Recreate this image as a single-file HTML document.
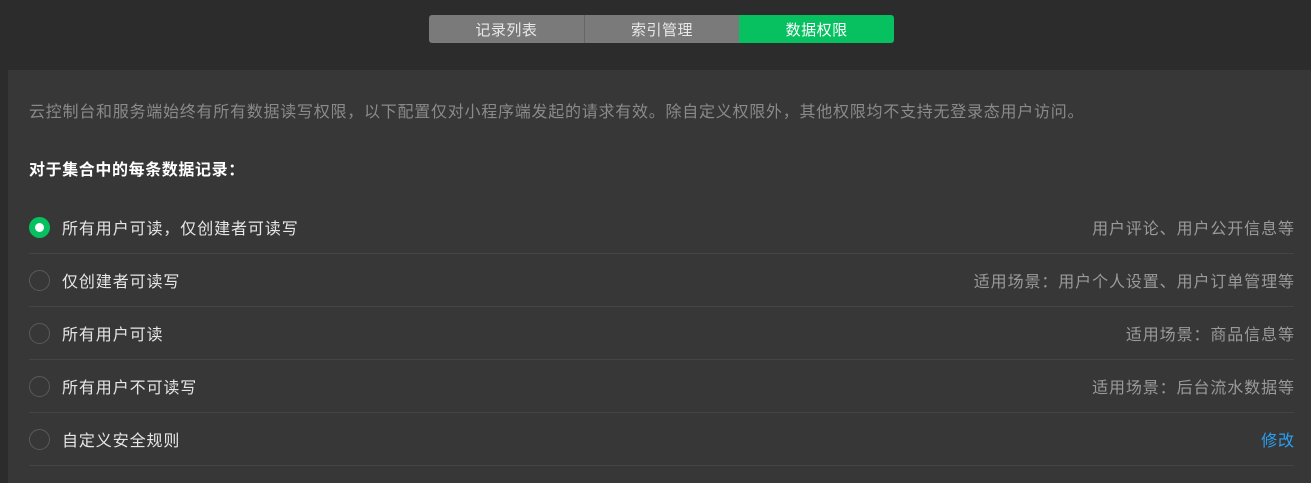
<!DOCTYPE html>
<html><head><meta charset="utf-8"><style>
body{margin:0;width:1311px;height:483px;background:#2c2c2c;font-family:"Liberation Sans","Noto Sans CJK SC",sans-serif;overflow:hidden;position:relative}
.tabs{position:absolute;left:429px;top:15px;width:465px;height:28px;display:flex;border-radius:3px;overflow:hidden}
.tabs div{flex:1;text-align:center;line-height:32px;font-size:15px;color:#e8e8e8;background:#7a7a7a;letter-spacing:0.5px}
.tabs div+div{border-left:1px solid #666}
.tabs .on{background:#07c160;color:#fff;border-left:none}
.panel{position:absolute;left:8px;top:70px;width:1303px;height:413px;background:#373737}
.desc{position:absolute;left:29px;top:98px;font-size:16px;color:#8a8a8a;letter-spacing:0.75px;white-space:nowrap}
.h{position:absolute;left:29px;top:156px;font-size:16px;color:#fff;font-weight:bold;letter-spacing:0.6px}
.row{position:absolute;left:29px;width:1265px;height:53px;border-bottom:1px solid #444;box-sizing:border-box}
.r{position:absolute;left:0;top:16px;width:21px;height:21px;border-radius:50%;border:1px solid #5a5a5a;box-sizing:border-box}
.r.on{background:#07c160;border:none}
.r.on:after{content:"";position:absolute;left:6px;top:6px;width:9px;height:9px;border-radius:50%;background:#fff}
.t{position:absolute;left:33px;top:14px;font-size:16px;color:#e6e6e6;letter-spacing:0.9px}
.s{position:absolute;right:0;top:14px;font-size:16px;color:#9a9a9a;letter-spacing:0.9px;margin-right:-0.9px}
</style></head><body>
<div class="tabs"><div>记录列表</div><div>索引管理</div><div class="on">数据权限</div></div>
<div class="panel"></div>
<div class="desc">云控制台和服务端始终有所有数据读写权限，以下配置仅对小程序端发起的请求有效。除自定义权限外，其他权限均不支持无登录态用户访问。</div>
<div class="h">对于集合中的每条数据记录：</div>
<div class="row" style="top:201px"><div class="r on"></div><div class="t">所有用户可读，仅创建者可读写</div><div class="s">用户评论、用户公开信息等</div></div>
<div class="row" style="top:254px"><div class="r"></div><div class="t">仅创建者可读写</div><div class="s">适用场景：用户个人设置、用户订单管理等</div></div>
<div class="row" style="top:307px"><div class="r"></div><div class="t">所有用户可读</div><div class="s">适用场景：商品信息等</div></div>
<div class="row" style="top:360px"><div class="r"></div><div class="t">所有用户不可读写</div><div class="s">适用场景：后台流水数据等</div></div>
<div class="row" style="top:413px"><div class="r"></div><div class="t">自定义安全规则</div><div class="s" style="color:#2b9ff0">修改</div></div>
</body></html>
